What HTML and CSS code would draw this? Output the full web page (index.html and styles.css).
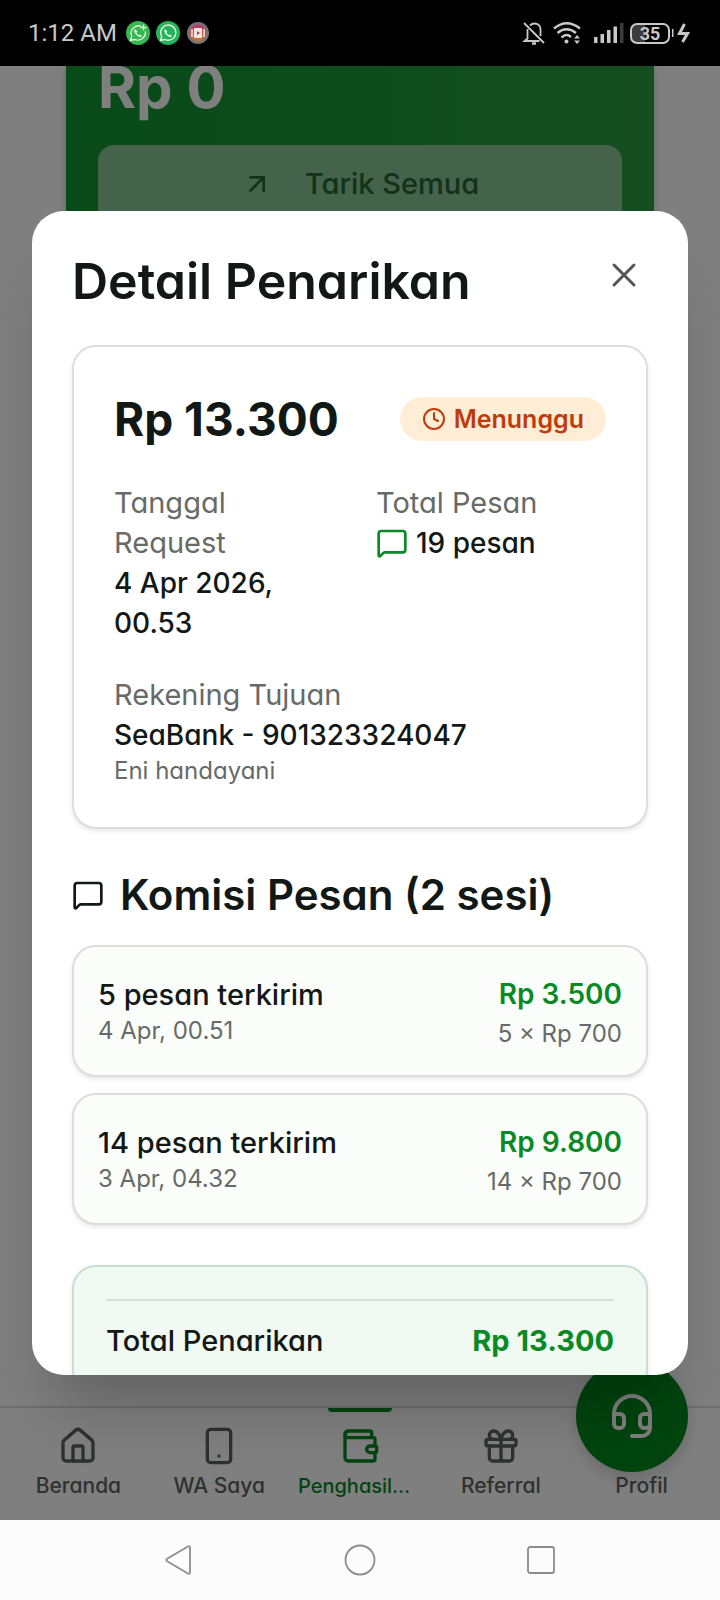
FILE: index.html
```html
<!DOCTYPE html>
<html lang="id">
    <head>
        <meta charset="utf-8">
        <meta name="viewport" content="width=device-width, initial-scale=1.0">
        <title>Detail Penarikan</title>
        <link rel="stylesheet" href="styles.css">
    </head>
    <body>
        <header class="status_bar"> <!-- phone status bar. -->
            <span class="clock">1:12 AM</span>
            <svg class="app_icon" viewBox="0 0 24 24">
                <circle cx="12" cy="12" r="12" fill="#35b84f"/>
                <path d="M15 5.200A7.600 7.600 0 0 0 5.700 15.500l-1.200 4L9 18.500A7.600 7.600 0 0 0 19.300 10.500M17.500 3.500v6M14.500 6.500h6" fill="none" stroke="#e8f5e4" stroke-width="1.300"/>
                <path d="M9 8c-1.500 1-.5 4 1.500 6s4.500 2.500 5.500 1.500l-1.800-2-1.200.8c-1-.5-2-1.500-2.500-2.500l.8-1.200z" fill="#e8f5e4"/>
            </svg>
            <svg class="app_icon" viewBox="0 0 24 24">
                <circle cx="12" cy="12" r="12" fill="#25b35c"/>
                <path d="M4.500 19.500l1.200-4A7.600 7.600 0 1 1 9 18.500z" fill="none" stroke="#e8f5e4" stroke-width="1.300"/>
                <path d="M9 8c-1.500 1-.5 4 1.500 6s4.500 2.500 5.500 1.500l-1.800-2-1.200.8c-1-.5-2-1.500-2.500-2.500l.8-1.200z" fill="#e8f5e4"/>
            </svg>
            <svg class="app_icon" viewBox="0 0 24 24">
                <defs>
                    <linearGradient id="reel" x1="0" y1="0" x2="0" y2="1">
                        <stop offset="0" stop-color="#b8306a"/>
                        <stop offset="1" stop-color="#c47a2c"/>
                    </linearGradient>
                </defs>
                <circle cx="12" cy="12" r="11" fill="#74747c"/>
                <circle cx="12" cy="12" r="8.500" fill="url(#reel)"/>
                <rect x="8" y="7" width="8" height="10" rx="1" fill="#f6e6e2"/>
                <path d="M6 8v8M18 8v8" stroke="#f6e6e2" stroke-width="1.500"/>
                <path d="M11 10l3 2-3 2z" fill="#a8404a"/>
            </svg>
            <span class="spacer"></span>
            <svg class="bell_icon" viewBox="0 0 24 24" fill="none" stroke="#c8c8c8" stroke-width="1.800">
                <path d="M2 2l20 20M5.500 8v9.500L2.500 20h15M8 4.500C12 .5 18.500 3 18.500 8.500V15"/>
                <path d="M10 22.500h4" stroke-width="2.500"/>
            </svg>
            <svg class="wifi_icon" viewBox="0 0 30 24" fill="none" stroke="#c8c8c8" stroke-width="2.400">
                <path d="M2 7.500q12.500-10.500 26 0M5.500 12q9-7.500 18.500 0M9.500 16.500q5-4.500 9.500-.5"/>
                <circle cx="14.500" cy="20.500" r="2" fill="#c8c8c8" stroke="none"/>
                <path d="M22 17.500l3-3.500 3 3.500zM22 19.500h6l-3 3.500z" fill="#c8c8c8" stroke="none"/>
            </svg>
            <svg class="signal_icon" viewBox="0 0 30 20" fill="#c8c8c8">
                <path d="M0 14h3.500v6H0zM6.500 11H10v9H6.500zM13 7h3.500v13H13zM19.500 3.500H23V20h-3.500z"/>
                <path d="M26 0h3.500v20H26z" fill="#3c3c3c"/>
            </svg>
            <span class="battery">35</span>
            <svg class="bolt_icon" viewBox="0 0 18 20">
                <path d="M0 6v8" stroke="#c8c8c8" stroke-width="3"/>
                <path d="M12.500 1 7.500 10.500h8L10.500 19" fill="none" stroke="#c8c8c8" stroke-width="3"/>
            </svg>
        </header>

        <div class="app">
            <!-- page behind the dialog -->
            <main class="page">
                <section class="balance">
                    <div class="balance_value">Rp 0</div>
                    <button type="button" class="withdraw">
                        <svg class="icon" viewBox="0 0 24 24"><path d="M7 7h10v10M7 17 17 7"/></svg>
                        Tarik Semua
                    </button>
                </section>
            </main>
            <nav class="tabs">
                <a href="#beranda" class="tab">
                    <svg class="icon" viewBox="0 0 24 24"><path d="M15 21v-8a1 1 0 0 0-1-1h-4a1 1 0 0 0-1 1v8"/><path d="M3 10a2 2 0 0 1 .709-1.528l7-6a2 2 0 0 1 2.582 0l7 6A2 2 0 0 1 21 10v9a2 2 0 0 1-2 2H5a2 2 0 0 1-2-2z"/></svg>
                    <span>Beranda</span>
                </a>
                <a href="#wa" class="tab">
                    <svg class="icon" viewBox="0 0 24 24"><rect x="5" y="2" width="14" height="20" rx="2"/><path d="M12 18h.01"/></svg>
                    <span>WA Saya</span>
                </a>
                <a href="#penghasilan" class="tab active">
                    <svg class="icon" viewBox="0 0 24 24"><path d="M19 7V4a1 1 0 0 0-1-1H5a2 2 0 0 0 0 4h15a1 1 0 0 1 1 1v4h-3a2 2 0 0 0 0 4h3a1 1 0 0 0 1-1v-2a1 1 0 0 0-1-1"/><path d="M3 5v14a2 2 0 0 0 2 2h15a1 1 0 0 0 1-1v-4"/></svg>
                    <span>Penghasil…</span>
                </a>
                <a href="#referral" class="tab">
                    <svg class="icon" viewBox="0 0 24 24"><rect x="3" y="8" width="18" height="4" rx="1"/><path d="M12 8v13M19 12v7a2 2 0 0 1-2 2H7a2 2 0 0 1-2-2v-7M7.500 8a2.500 2.500 0 0 1 0-5A4.800 8 0 0 1 12 8a4.800 8 0 0 1 4.500-5 2.500 2.500 0 0 1 0 5"/></svg>
                    <span>Referral</span>
                </a>
                <a href="#profil" class="tab">
                    <svg class="icon" viewBox="0 0 24 24"><path d="M19 21v-2a4 4 0 0 0-4-4H9a4 4 0 0 0-4 4v2"/><circle cx="12" cy="7" r="4"/></svg>
                    <span>Profil</span>
                </a>
            </nav>
            <button type="button" class="support" aria-label="Bantuan">
                <svg class="icon" viewBox="0 0 24 24"><path d="M3 11h3a2 2 0 0 1 2 2v3a2 2 0 0 1-2 2H5a2 2 0 0 1-2-2v-5Zm0 0a9 9 0 1 1 18 0m0 0v5a2 2 0 0 1-2 2h-1a2 2 0 0 1-2-2v-3a2 2 0 0 1 2-2h3Z"/><path d="M21 16v2a4 4 0 0 1-4 4h-5"/></svg>
            </button>

            <div class="overlay">
                <div class="dialog" role="dialog" aria-labelledby="dialog_title">
                    <div class="dialog_head">
                        <h1 id="dialog_title">Detail Penarikan</h1>
                        <button type="button" class="close" aria-label="Tutup">
                            <svg class="icon" viewBox="0 0 24 24"><path d="M18 6 6 18M6 6l12 12"/></svg>
                        </button>
                    </div>

                    <section class="card detail">
                        <div class="amount_row">
                            <strong class="amount">Rp 13.300</strong>
                            <span class="badge">
                                <svg class="icon" viewBox="0 0 24 24"><circle cx="12" cy="12" r="10"/><path d="M12 6v6l4 2"/></svg>
                                Menunggu
                            </span>
                        </div>
                        <div class="facts">
                            <div>
                                <div class="label">Tanggal<br>Request</div>
                                <div class="value">4 Apr 2026,<br>00.53</div>
                            </div>
                            <div>
                                <div class="label">Total Pesan</div>
                                <div class="value with_icon">
                                    <svg class="icon" viewBox="0 0 24 24"><path d="M22 17a2 2 0 0 1-2 2H6.828a2 2 0 0 0-1.414.586l-2.202 2.202A.71.71 0 0 1 2 21.286V5a2 2 0 0 1 2-2h16a2 2 0 0 1 2 2z"/></svg>
                                    19 pesan
                                </div>
                            </div>
                        </div>
                        <div>
                            <div class="label">Rekening Tujuan</div>
                            <div class="value">SeaBank - 901323324047</div>
                            <div class="note">Eni handayani</div>
                        </div>
                    </section>

                    <h2>
                        <svg class="icon" viewBox="0 0 24 24"><path d="M22 17a2 2 0 0 1-2 2H6.828a2 2 0 0 0-1.414.586l-2.202 2.202A.71.71 0 0 1 2 21.286V5a2 2 0 0 1 2-2h16a2 2 0 0 1 2 2z"/></svg>
                        Komisi Pesan (2 sesi)
                    </h2>

                    <div class="sessions">
                        <div class="card session">
                            <div>
                                <div class="name">5 pesan terkirim</div>
                                <div class="note">4 Apr, 00.51</div>
                            </div>
                            <div class="earned">
                                <div class="price">Rp 3.500</div>
                                <div class="note">5 × Rp 700</div>
                            </div>
                        </div>
                        <div class="card session">
                            <div>
                                <div class="name">14 pesan terkirim</div>
                                <div class="note">3 Apr, 04.32</div>
                            </div>
                            <div class="earned">
                                <div class="price">Rp 9.800</div>
                                <div class="note">14 × Rp 700</div>
                            </div>
                        </div>
                    </div>

                    <section class="card total">
                        <div class="total_row">
                            <span class="name">Total Penarikan</span>
                            <strong class="total_value">Rp 13.300</strong>
                        </div>
                    </section>
                </div>
            </div>
        </div>

        <footer class="system_nav"> <!-- android buttons. -->
            <button type="button" aria-label="Kembali"><svg viewBox="0 0 32 32"><path d="M4.500 14.500 25 2.500q2-1 2 1.500v24q0 2.500-2 1.500L4.500 17.500q-2.500-1.500 0-3z"/></svg></button>
            <button type="button" aria-label="Layar utama"><svg viewBox="0 0 32 32"><circle cx="16" cy="16" r="14.500"/></svg></button>
            <button type="button" aria-label="Terbaru"><svg viewBox="0 0 32 32"><rect x="3" y="3" width="26" height="26" rx="2"/></svg></button>
        </footer>
    </body>
</html>
```
FILE: styles.css
```css
*{
    margin: 0;
    padding: 0;
    box-sizing: border-box;
}
body{
    height: 100vh;
    display: flex; /* status bar, app and system buttons in one column. */
    flex-direction: column;
    overflow: hidden;
    background-color: #fff;
    color: #121815;
    font-family: Inter, "Open Sans", sans-serif;
    font-feature-settings: "cv11"; /* single-storey a. */
    font-size: 28px;
    line-height: 40px;
}
button{
    border: none;
    background: none;
    font: inherit;
    font-feature-settings: inherit;
    color: inherit;
}
.icon{
    width: 32px;
    height: 32px;
    flex: none;
    fill: none;
    stroke: currentColor;
    stroke-width: 2;
    stroke-linecap: round;
    stroke-linejoin: round;
}

/* status bar */
.status_bar{
    height: 66px;
    flex: none;
    display: flex;
    align-items: center;
    gap: 6px;
    padding: 0 30px 0 28px;
    background-color: #000;
    color: #c8c8c8;
    font-family: Roboto, sans-serif;
}
.clock{
    margin-right: 3px;
    font-size: 24px;
}
.app_icon{
    width: 24px;
    height: 24px;
}
.spacer{
    flex: 1;
}
.bell_icon{
    width: 24px;
    height: 24px;
}
.wifi_icon{
    width: 30px;
    height: 24px;
    margin-right: 6px;
}
.signal_icon{
    width: 30px;
    height: 20px;
}
.battery{
    width: 40px;
    height: 21px;
    border: 2px solid #c8c8c8;
    border-radius: 7px;
    background: linear-gradient(90deg, #3c3c3c 35%, #000 35%);
    font-size: 18px;
    font-weight: bold;
    line-height: 17px;
    text-align: center;
}
.bolt_icon{
    width: 18px;
    height: 20px;
    margin-left: -4px;
}

/* page behind the dialog */
.app{
    position: relative;
    flex: 1;
    min-height: 0;
    display: flex;
    flex-direction: column;
}
.page{
    flex: 1;
    min-height: 0;
    padding: 0 66px;
    overflow: hidden;
}
.balance{
    padding: 0 32px 32px;
    border-radius: 0 0 24px 24px;
    background: linear-gradient(90deg, #109630, #2a9c42);
    box-shadow: 0 2px 8px rgba(0, 0, 0, .2);
}
.balance_value{
    height: 79px;
    color: #fff;
    font-size: 58px;
    font-weight: 700;
    line-height: 42px;
}
.withdraw{
    width: 100%;
    height: 78px;
    display: flex;
    align-items: center;
    justify-content: center;
    gap: 32px;
    border-radius: 16px;
    background-color: #8ac494;
    color: #246434;
    font-size: 29px;
    font-weight: 500;
}
.tabs{
    height: 114px;
    flex: none;
    display: flex;
    padding: 0 8px;
    border-top: 2px solid #ddd;
}
.tab{
    flex: 1;
    min-width: 0;
    display: flex;
    flex-direction: column;
    align-items: center;
    gap: 6px;
    padding-top: 18px;
    color: #5c625e;
    font-size: 21px;
    font-weight: 500;
    line-height: 28px;
    text-decoration: none;
}
.tab .icon{
    width: 40px;
    height: 40px;
}
.active{
    color: #008a20;
}
.active::before{ /* green mark above the open tab. */
    content: "";
    width: 64px;
    height: 4px;
    margin: -18px 0 8px;
    border-radius: 0 0 4px 4px;
    background-color: #008a20;
}
.active span{ /* the shortened label starts at the left of its box. */
    width: 124px;
    font-size: 20px;
}
.support{
    position: absolute;
    right: 32px;
    bottom: 48px;
    width: 112px;
    height: 112px;
    display: flex;
    align-items: center;
    justify-content: center;
    border-radius: 50%;
    background-color: #00881c;
    box-shadow: 0 8px 16px rgba(0, 0, 0, .15);
    color: #fff;
}
.support .icon{
    width: 48px;
    height: 48px;
}

/* dialog */
.overlay{
    position: absolute;
    inset: 0;
    display: flex;
    align-items: center;
    padding: 0 32px;
    background-color: rgba(0, 0, 0, .5);
}
.dialog{
    width: 100%;
    height: 80%;
    padding: 40px;
    overflow-y: auto;
    scrollbar-width: none;
    border-radius: 32px;
    background-color: #fff;
    box-shadow: 0 50px 64px -24px rgba(0, 0, 0, .25);
}
.dialog_head{
    display: flex;
    justify-content: space-between;
    align-items: flex-start;
    margin-bottom: 34px;
}
h1{
    font-size: 50px;
    font-weight: 600;
    line-height: 60px;
}
.close{
    height: 48px;
    padding: 4px;
    color: #555;
}
.close .icon{
    width: 40px;
    height: 40px;
    stroke-width: 1.8;
}
.card{
    border: 2px solid #ddd;
    border-radius: 24px;
    box-shadow: 0 2px 4px rgba(0, 0, 0, .1);
}
.detail{
    display: flex;
    flex-direction: column;
    gap: 32px;
    padding: 40px;
}
.amount_row{
    display: flex;
    justify-content: space-between;
    align-items: center;
}
.amount{
    font-size: 46px;
    font-weight: 700;
    line-height: 64px;
}
.badge{
    height: 44px;
    display: flex;
    align-items: center;
    gap: 8px;
    padding: 0 22px;
    border-radius: 22px;
    background-color: #ffedd5;
    color: #bf3b0a;
    font-size: 25px;
    font-weight: 600;
}
.badge .icon{
    width: 24px;
    height: 24px;
}
.facts{
    display: grid;
    grid-template-columns: 1fr 1fr;
    gap: 32px;
}
.label{
    color: #666b68;
    font-size: 29px;
}
.value{
    font-weight: 500;
}
.name{
    font-size: 29px;
    font-weight: 500;
}
.with_icon{
    display: flex;
    align-items: center;
    gap: 8px;
}
.with_icon .icon{
    color: #0a8a26;
}
.note{
    color: #666b68;
    font-size: 24px;
    line-height: 32px;
}
h2{
    display: flex;
    align-items: center;
    gap: 16px;
    margin: 38px 0 22px;
    font-size: 42px;
    font-weight: 600;
    line-height: 56px;
}
.sessions{
    display: flex;
    flex-direction: column;
    gap: 16px;
}
.session{
    display: flex;
    justify-content: space-between;
    align-items: center;
    padding: 24px;
    background-color: #fafdfa;
}
.earned{
    text-align: right;
}
.earned .note{
    line-height: 34px;
}
.price{
    color: #0a8a26;
    font-weight: 600;
    line-height: 46px;
}
.total{
    margin-top: 40px;
    padding: 32px;
    border-color: #c6dfd0;
    background-color: #f0f9f2;
}
.total_row{
    display: flex;
    justify-content: space-between;
    align-items: center;
    padding-top: 20px;
    border-top: 2px solid #d4ddd6;
}
.total_value{
    color: #0a8a26;
    font-size: 29px;
    font-weight: 700;
}

/* android buttons */
.system_nav{
    height: 80px;
    flex: none;
    display: flex;
    justify-content: space-evenly;
    align-items: center;
    padding: 0 14px;
    background-color: #fcfcfc;
}
.system_nav button{
    width: 32px;
    height: 32px;
}
.system_nav svg{
    width: 32px;
    height: 32px;
    fill: none;
    stroke: #8c8c8c;
    stroke-width: 1.8;
}
```
